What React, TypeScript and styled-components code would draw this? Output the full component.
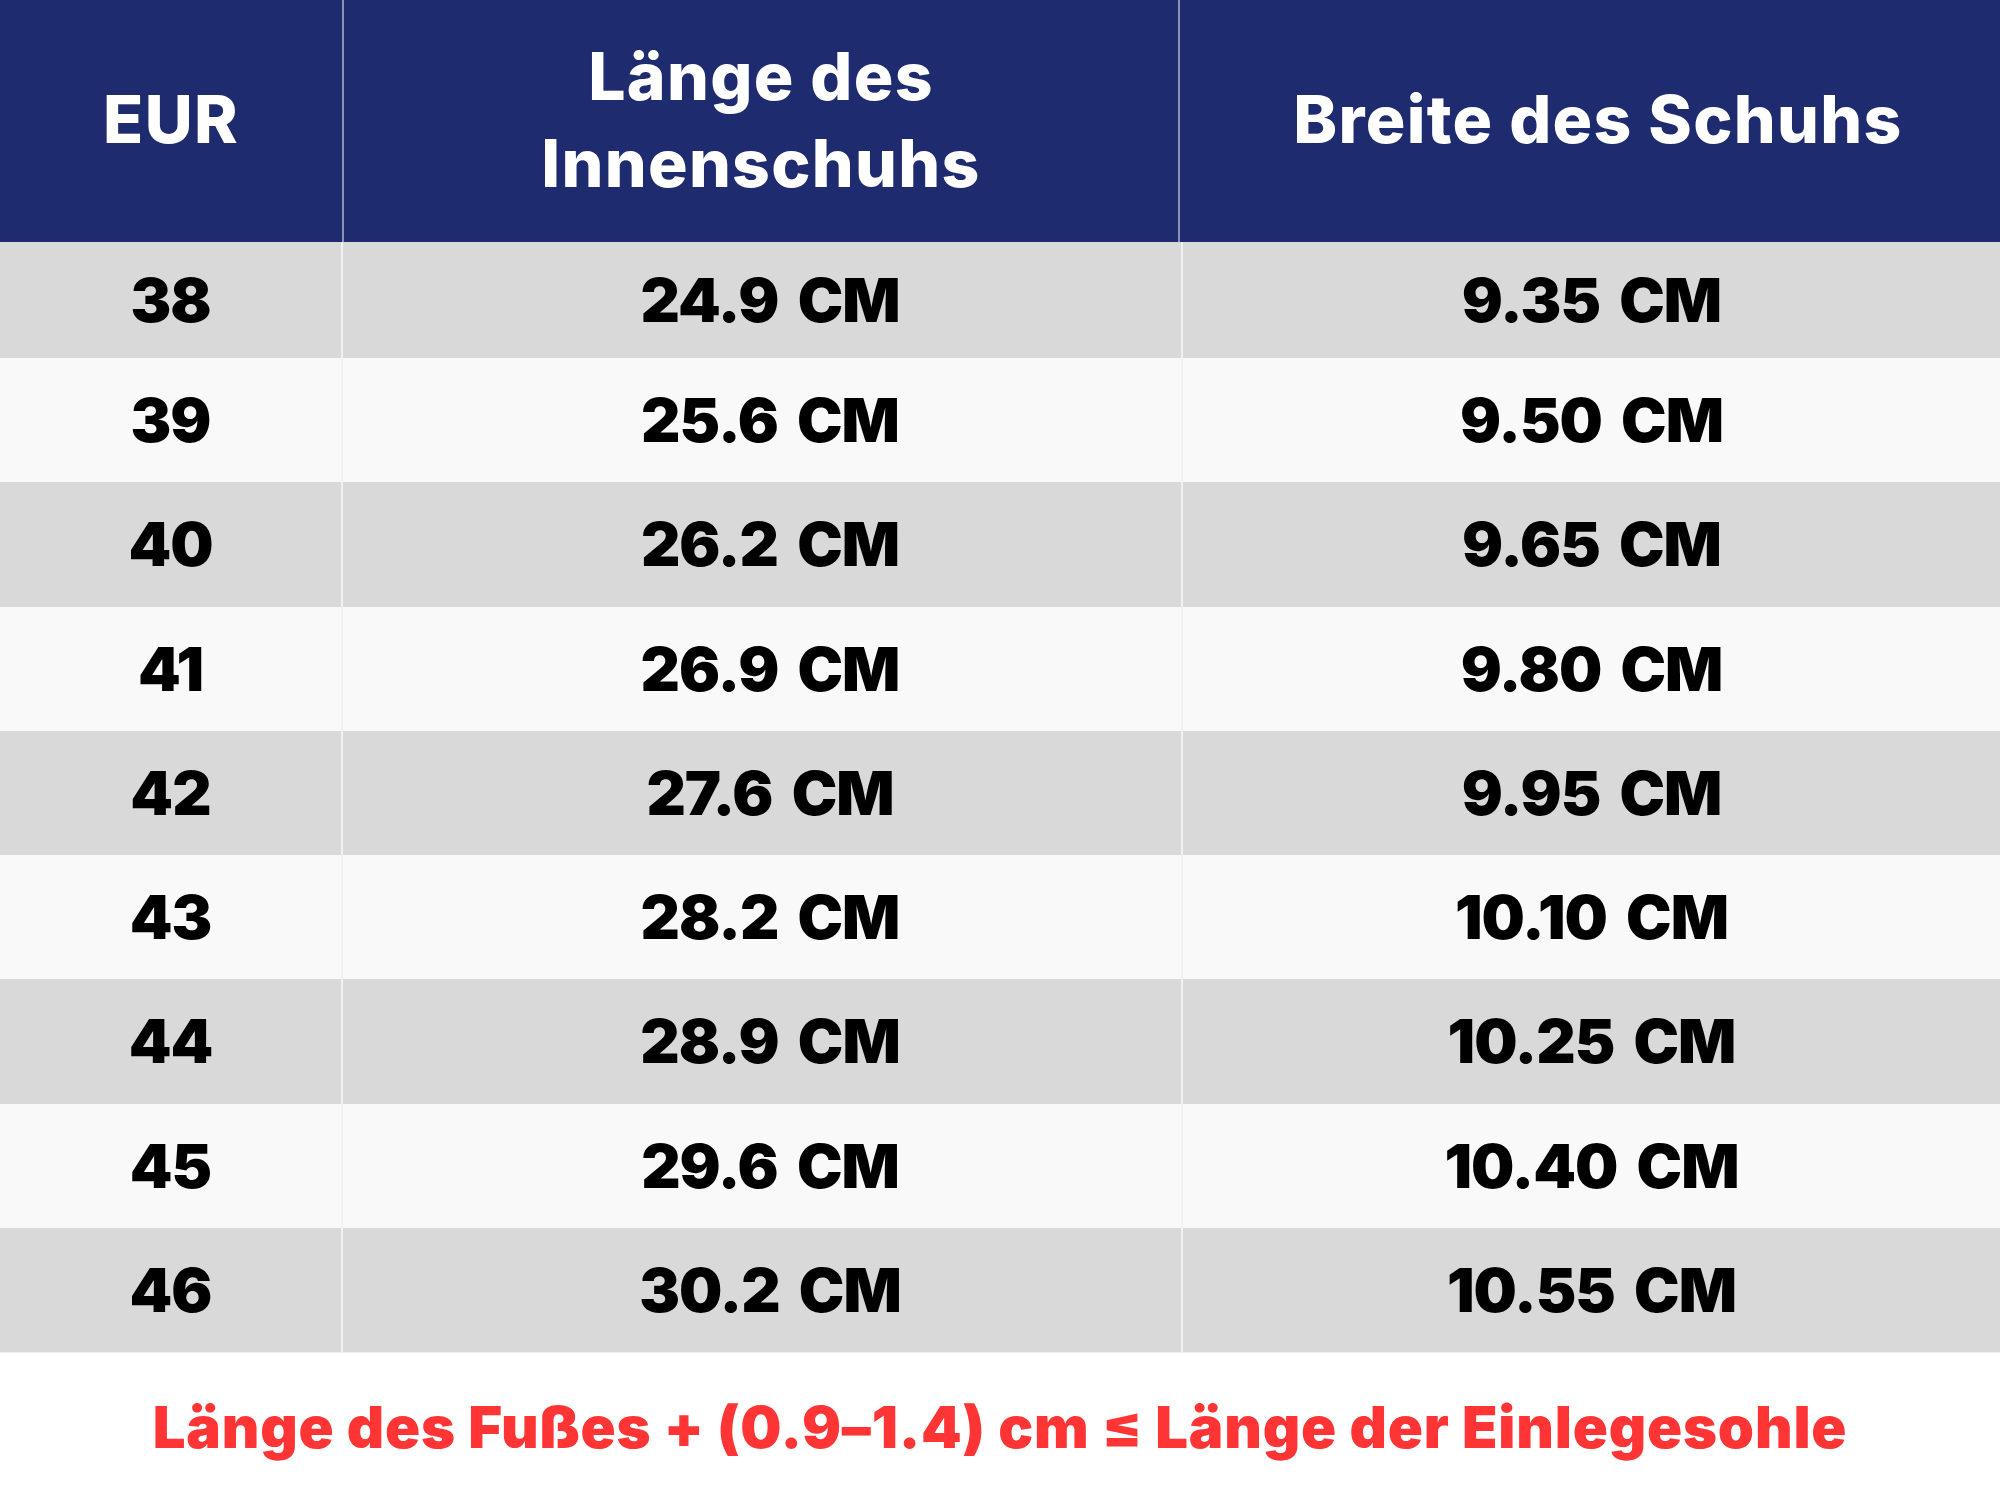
import React from "react";
import styled, { createGlobalStyle } from "styled-components";

const GlobalStyle = createGlobalStyle`
  html, body {
    margin: 0;
    padding: 0;
    background: #ffffff;
  }
  body {
    font-family: Inter, "Liberation Sans", sans-serif;
  }
`;

const Page = styled.div`
  width: 2000px;
  display: flex;
  flex-direction: column;
`;

const HeaderRow = styled.div`
  display: grid;
  grid-template-columns: 342px 836px 1fr;
  height: 242px;
  background: #1e2b6e;
`;

const HeaderCell = styled.div<{ $divider?: boolean; $shift?: number }>`
  display: flex;
  align-items: center;
  justify-content: center;
  text-align: center;
  color: #ffffff;
  font-family: Inter, "Liberation Sans", sans-serif;
  font-weight: 800;
  font-size: 66px;
  line-height: 87px;
  letter-spacing: 1.3px;
  padding-bottom: 3px;
  padding-left: ${(p) => p.$shift ?? 0}px;
  box-sizing: border-box;
  border-left: ${(p) => (p.$divider ? "2px solid #8a90b6" : "none")};
`;

const Body = styled.div`
  display: flex;
  flex-direction: column;
`;

const Row = styled.div<{ $shade: boolean; $first: boolean }>`
  display: grid;
  grid-template-columns: 341px 840px 1fr;
  height: ${(p) => (p.$first ? "116px" : "124.25px")};
  background: ${(p) => (p.$shade ? "#d9d9d9" : "#f9f9f9")};
`;

const Cell = styled.div<{ $divider?: boolean; $shift?: number }>`
  display: flex;
  align-items: center;
  justify-content: center;
  padding-left: ${(p) => p.$shift ?? 0}px;
  color: #000000;
  font-family: Inter, "Liberation Sans", sans-serif;
  font-weight: 900;
  font-size: 61px;
  letter-spacing: -1px;
  word-spacing: 8px;
  border-left: ${(p) => (p.$divider ? "2px solid #f1f1f1" : "none")};
`;

const Footer = styled.div`
  height: 148px;
  display: flex;
  align-items: center;
  justify-content: center;
  border-top: 1px solid #eeeeee;
  box-sizing: border-box;
`;

const Note = styled.div`
  color: #ff3434;
  font-family: Inter, "Liberation Sans", sans-serif;
  font-weight: 900;
  font-size: 58px;
  letter-spacing: 0.8px;
`;

const rows: [string, string, string][] = [
  ["38", "24.9 CM", "9.35 CM"],
  ["39", "25.6 CM", "9.50 CM"],
  ["40", "26.2 CM", "9.65 CM"],
  ["41", "26.9 CM", "9.80 CM"],
  ["42", "27.6 CM", "9.95 CM"],
  ["43", "28.2 CM", "10.10 CM"],
  ["44", "28.9 CM", "10.25 CM"],
  ["45", "29.6 CM", "10.40 CM"],
  ["46", "30.2 CM", "10.55 CM"],
];

export default function App() {
  return (
    <Page>
      <GlobalStyle />
      <HeaderRow>
        <HeaderCell>EUR</HeaderCell>
        <HeaderCell $divider>
          Länge des
          <br />
          Innenschuhs
        </HeaderCell>
        <HeaderCell $divider $shift={16}>
          Breite des Schuhs
        </HeaderCell>
      </HeaderRow>
      <Body>
        {rows.map((r, i) => (
          <Row key={r[0]} $shade={i % 2 === 0} $first={i === 0}>
            <Cell>{r[0]}</Cell>
            <Cell $divider $shift={16}>
              {r[1]}
            </Cell>
            <Cell $divider>{r[2]}</Cell>
          </Row>
        ))}
      </Body>
      <Footer>
        <Note>Länge des Fußes + (0.9–1.4) cm ≤ Länge der Einlegesohle</Note>
      </Footer>
    </Page>
  );
}
